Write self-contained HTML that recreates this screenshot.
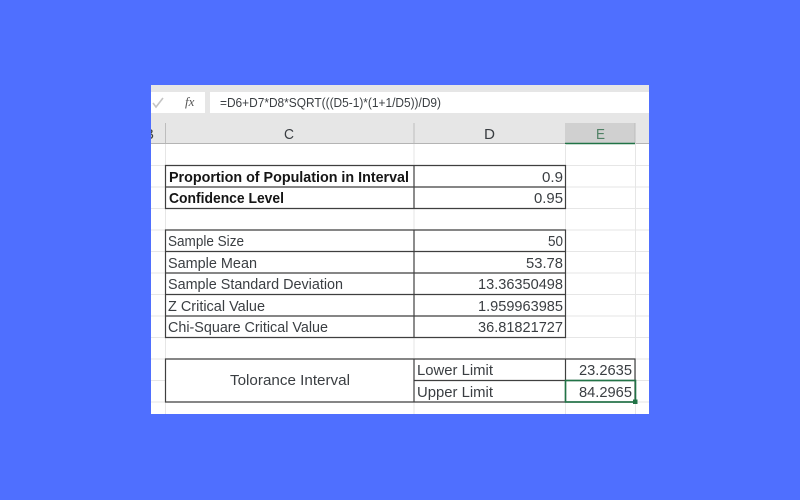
<!DOCTYPE html>
<html><head><meta charset="utf-8"><style>
html,body{margin:0;padding:0;width:800px;height:500px;overflow:hidden;background:#4f6fff}
svg{display:block}
text{font-family:"Liberation Sans",sans-serif;font-size:15px;fill:#3a3e42}
.b{font-weight:bold;fill:#151515}
.soft{filter:blur(0.3px)}
</style></head><body>
<svg width="800" height="500" viewBox="0 0 800 500" xmlns="http://www.w3.org/2000/svg">
<defs><clipPath id="c"><rect x="151" y="85" width="498" height="329"/></clipPath></defs>
<rect width="800" height="500" fill="#4f6fff"/>
<g clip-path="url(#c)">
<rect x="151" y="85" width="498" height="329" fill="#fff"/>
<!-- top bars -->
<rect x="151" y="85" width="498" height="59" fill="#e6e6e6"/>
<rect x="151" y="92" width="54" height="21" fill="#fff"/>
<rect x="210" y="92" width="439" height="21" fill="#fff"/>
<path d="M153 103l3 4 7-9" fill="none" stroke="#c4c4c4" stroke-width="1.6"/>
<g class="soft">
<text x="185" y="106" style="font-family:'Liberation Serif',serif;font-style:italic;font-size:13px;fill:#555">fx</text>
<text x="220" y="107" textLength="221" lengthAdjust="spacingAndGlyphs" style="font-size:13px">=D6+D7*D8*SQRT(((D5-1)*(1+1/D5))/D9)</text>
</g>
<!-- headers -->
<rect x="565" y="123" width="70" height="21" fill="#d0d0d0"/>
<path d="M165.5 123V144M414 123V144M635 123V144" stroke="#bdbdbd" fill="none"/>
<path d="M151 143.5H565M636 143.5H649" stroke="#b4b4b4" fill="none"/>
<path d="M565 143.5H635" stroke="#217346" stroke-width="1.4" fill="none"/>
<g class="soft">
<text x="144" y="139" style="font-size:15px">B</text>
<text x="284" y="139" textLength="10" lengthAdjust="spacingAndGlyphs" style="font-size:15px">C</text>
<text x="484" y="139" textLength="11" lengthAdjust="spacingAndGlyphs" style="font-size:15px">D</text>
<text x="596" y="139" textLength="9" lengthAdjust="spacingAndGlyphs" style="font-size:15px;fill:#4f8064">E</text>
</g>
<!-- gridlines -->
<path d="M151 165.5H649M151 187H649M151 208.5H649M151 230H649M151 251.5H649M151 273H649M151 294.5H649M151 316H649M151 337.5H649M151 359H649M151 380.5H649M151 402H649M165.5 144V414M414 144V414M565.5 144V414M635.5 144V414" stroke="#e6e6e6" fill="none"/>
<!-- table interiors: clear gridlines in merged cell -->
<rect x="166" y="359.5" width="248" height="42" fill="#fff"/>
<!-- table borders -->
<g stroke="#3f3f3f" fill="none" stroke-width="1.2">
<path d="M165.5 165.5H565.5V208.5H165.5ZM165.5 187H565.5M414 165.5V208.5"/>
<path d="M165.5 230H565.5V337.5H165.5ZM165.5 251.5H565.5M165.5 273H565.5M165.5 294.5H565.5M165.5 316H565.5M414 230V337.5"/>
<path d="M165.5 359H635V402H165.5ZM414 380.5H635M414 359V402M565.5 359V402"/>
</g>
<rect x="565.5" y="380.5" width="70" height="21.5" fill="none" stroke="#217346" stroke-width="1.6"/>
<rect x="633" y="399.5" width="4.5" height="4.5" fill="#217346"/>
<!-- text -->
<g class="soft">
<text class="b" x="169" y="182" textLength="240" lengthAdjust="spacingAndGlyphs">Proportion of Population in Interval</text>
<text class="b" x="169" y="203" textLength="115" lengthAdjust="spacingAndGlyphs">Confidence Level</text>
<text x="168" y="246" textLength="76" lengthAdjust="spacingAndGlyphs">Sample Size</text>
<text x="168" y="268" textLength="89" lengthAdjust="spacingAndGlyphs">Sample Mean</text>
<text x="168" y="289" textLength="175" lengthAdjust="spacingAndGlyphs">Sample Standard Deviation</text>
<text x="168" y="311" textLength="97" lengthAdjust="spacingAndGlyphs">Z Critical Value</text>
<text x="168" y="332" textLength="160" lengthAdjust="spacingAndGlyphs">Chi-Square Critical Value</text>
<text x="230" y="385" textLength="120" lengthAdjust="spacingAndGlyphs">Tolorance Interval</text>
<text x="417" y="375" textLength="76" lengthAdjust="spacingAndGlyphs">Lower Limit</text>
<text x="417" y="397" textLength="76" lengthAdjust="spacingAndGlyphs">Upper Limit</text>
<text x="542" y="182" textLength="21" lengthAdjust="spacingAndGlyphs">0.9</text>
<text x="534" y="203" textLength="29" lengthAdjust="spacingAndGlyphs">0.95</text>
<text x="548" y="246" textLength="15" lengthAdjust="spacingAndGlyphs">50</text>
<text x="526" y="268" textLength="37" lengthAdjust="spacingAndGlyphs">53.78</text>
<text x="478" y="289" textLength="85" lengthAdjust="spacingAndGlyphs">13.36350498</text>
<text x="478" y="311" textLength="85" lengthAdjust="spacingAndGlyphs">1.959963985</text>
<text x="478" y="332" textLength="85" lengthAdjust="spacingAndGlyphs">36.81821727</text>
<text x="579" y="375" textLength="53" lengthAdjust="spacingAndGlyphs">23.2635</text>
<text x="579" y="397" textLength="53" lengthAdjust="spacingAndGlyphs">84.2965</text>
</g>
</g>
</svg>
</body></html>
